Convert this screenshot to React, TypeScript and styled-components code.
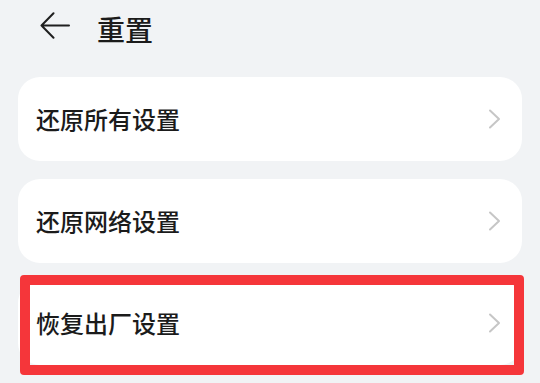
import React from "react";
import styled, { createGlobalStyle } from "styled-components";

const Global = createGlobalStyle`
  html, body { margin: 0; padding: 0; background: #f1f3f5; }
  body { font-family: "Noto Sans CJK SC", "Noto Sans", sans-serif; }
`;

const Page = styled.div`
  width: 540px;
  height: 383px;
  overflow: hidden;
  background: #f1f3f5;
  padding: 0 18px;
  box-sizing: border-box;
`;

const Header = styled.div`
  display: flex;
  align-items: center;
  height: 56px;
  padding-left: 22px;
  gap: 27px;
  box-sizing: border-box;
`;

const BackButton = styled.div`
  width: 30px;
  height: 26px;
  display: flex;
  align-items: center;
  justify-content: center;
  margin-top: -6px;
`;

const Title = styled.div`
  font-size: 28px;
  font-weight: 500;
  color: #1b1b1b;
  line-height: 1;
  margin-top: 2px;
`;

const List = styled.div`
  display: flex;
  flex-direction: column;
  gap: 18px;
  margin-top: 21px;
`;

const CardWrap = styled.div`
  position: relative;
`;

const Card = styled.div`
  height: 84px;
  background: #ffffff;
  border-radius: 22px;
  display: flex;
  align-items: center;
  justify-content: space-between;
  padding: 0 20px 0 18px;
  box-sizing: border-box;
`;

const Label = styled.span`
  font-size: 24px;
  font-weight: 500;
  color: #1b1b1b;
  line-height: 1;
`;

const Highlight = styled.div`
  position: absolute;
  left: 2px;
  right: -2px;
  top: -6px;
  bottom: -10px;
  border: 10px solid #f5363a;
  border-radius: 4px;
  pointer-events: none;
`;

const Chevron = () => (
  <svg width="14" height="20" viewBox="0 0 14 20" fill="none">
    <path d="M2 1.5 L11 10 L2 18.5" stroke="#c6c6c6" strokeWidth="2" strokeLinecap="round" strokeLinejoin="round" />
  </svg>
);

const BackArrow = () => (
  <svg width="30" height="27" viewBox="0 0 30 27" fill="none">
    <path d="M13.5 1.2 L1.5 13.5 L13.5 25.8 M1.5 13.5 H29" stroke="#1f1f1f" strokeWidth="2" strokeLinecap="round" strokeLinejoin="round" />
  </svg>
);

const items = ["还原所有设置", "还原网络设置", "恢复出厂设置"];

export default function App() {
  return (
    <>
      <Global />
      <Page>
        <Header>
          <BackButton>
            <BackArrow />
          </BackButton>
          <Title>重置</Title>
        </Header>
        <List>
          {items.map((t, i) => (
            <CardWrap key={t}>
              <Card>
                <Label>{t}</Label>
                <Chevron />
              </Card>
              {i === 2 && <Highlight />}
            </CardWrap>
          ))}
        </List>
      </Page>
    </>
  );
}
